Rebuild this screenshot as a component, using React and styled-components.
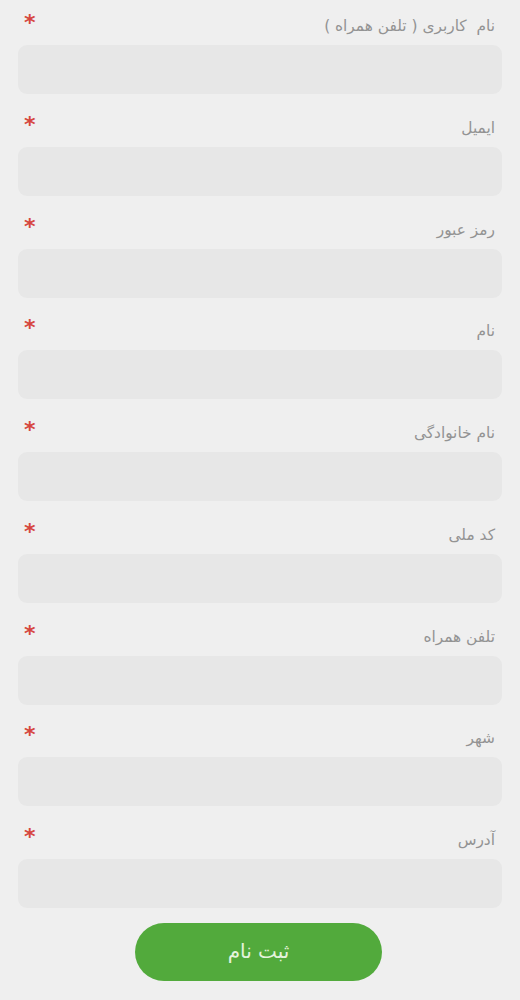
import React from "react";
import styled, { createGlobalStyle } from "styled-components";

const Global = createGlobalStyle`
  html, body { margin: 0; padding: 0; background: #efefef; }
  body { font-family: "DejaVu Sans", "Noto Sans", sans-serif; }
`;

const Form = styled.form`
  width: 520px;
  box-sizing: border-box;
  padding: 0 18px;
  display: flex;
  flex-direction: column;
  background: #efefef;
`;

const Field = styled.div`
  display: flex;
  flex-direction: column;
  margin-bottom: 7.75px;
`;

const LabelRow = styled.div`
  height: 45px;
  display: flex;
  justify-content: space-between;
  align-items: flex-start;
  direction: ltr;
`;

const Star = styled.span`
  color: #d6473f;
  font-size: 22px;
  font-weight: bold;
  line-height: 1;
  margin-left: 6px;
  margin-top: 12px;
`;

const Label = styled.label`
  direction: rtl;
  color: #939393;
  font-size: 15.4px;
  line-height: 1;
  margin-top: 19px;
  margin-right: 7px;
  white-space: pre;
`;

const Input = styled.input`
  height: 49px;
  box-sizing: border-box;
  border: none;
  border-radius: 9px;
  background: #e7e7e7;
  outline: none;
  width: 100%;
`;

const Submit = styled.button`
  align-self: center;
  margin: 7px 0 0 -3px;
  width: 247px;
  height: 58px;
  border: none;
  border-radius: 29px;
  background: #52aa3c;
  color: #e4f3dc;
  font-family: inherit;
  font-size: 20px;
  padding-bottom: 2px;
`;

const fields = [
  "نام  کاربری ( تلفن همراه )",
  "ایمیل",
  "رمز عبور",
  "نام",
  "نام خانوادگی",
  "کد ملی",
  "تلفن همراه",
  "شهر",
  "آدرس",
];

export default function App() {
  return (
    <>
      <Global />
      <Form onSubmit={(e) => e.preventDefault()}>
        {fields.map((f) => (
          <Field key={f}>
            <LabelRow>
              <Star>*</Star>
              <Label>{f}</Label>
            </LabelRow>
            <Input />
          </Field>
        ))}
        <Submit type="submit">ثبت نام</Submit>
      </Form>
    </>
  );
}
